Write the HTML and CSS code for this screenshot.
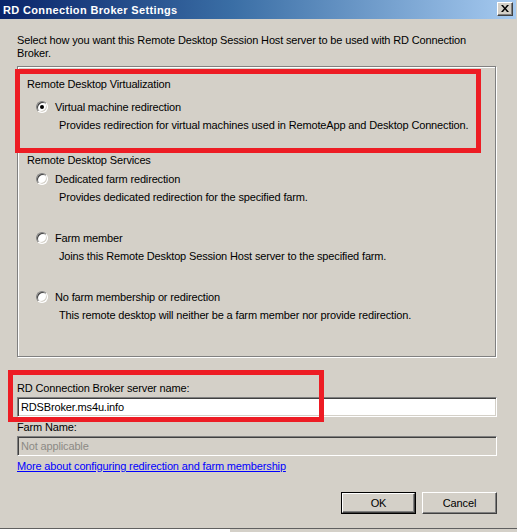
FILE: index.html
```html
<!DOCTYPE html>
<html>
<head>
<meta charset="utf-8">
<link rel="stylesheet" href="styles.css">
</head>
<body>
<div class="window">
  <div class="titlebar">
    <span class="title">RD Connection Broker Settings</span>
    <span class="close">
      <svg width="8" height="7" viewBox="0 0 8 7"><path d="M0 0h2l2 2.5L6 0h2L5 3.5 8 7H6L4 4.5 2 7H0l3-3.5z" fill="#000"/></svg>
    </span>
  </div>
  <div class="content">
    <p class="intro">Select how you want this Remote Desktop Session Host server to be used with RD Connection<br>Broker.</p>
    <div class="group">
      <div class="heading">Remote Desktop Virtualization</div>
      <div class="option first">
        <div class="opt-row"><span class="radio checked"></span><span>Virtual machine redirection</span></div>
        <div class="desc">Provides redirection for virtual machines used in RemoteApp and Desktop Connection.</div>
      </div>
      <div class="heading second">Remote Desktop Services</div>
      <div class="option">
        <div class="opt-row"><span class="radio"></span><span>Dedicated farm redirection</span></div>
        <div class="desc">Provides dedicated redirection for the specified farm.</div>
      </div>
      <div class="option spaced">
        <div class="opt-row"><span class="radio"></span><span>Farm member</span></div>
        <div class="desc">Joins this Remote Desktop Session Host server to the specified farm.</div>
      </div>
      <div class="option spaced">
        <div class="opt-row"><span class="radio"></span><span>No farm membership or redirection</span></div>
        <div class="desc">This remote desktop will neither be a farm member nor provide redirection.</div>
      </div>
    </div>
    <div class="field-label server">RD Connection Broker server name:</div>
    <div class="textbox">RDSBroker.ms4u.info</div>
    <div class="field-label farm">Farm Name:</div>
    <div class="textbox disabled">Not applicable</div>
    <a class="link" href="#">More about configuring redirection and farm membership</a>
    <div class="buttons">
      <div class="btn default"><span class="btn-inner">OK</span></div>
      <div class="btn"><span class="btn-inner">Cancel</span></div>
    </div>
  </div>
  <div class="bottom-strip"><span class="strip-white"></span><span class="strip-gray"></span></div>
  <div class="annot annot-1"></div>
  <div class="annot annot-2"></div>
</div>
</body>
</html>
```
FILE: styles.css
```css
html, body {
  margin: 0;
  padding: 0;
}
body {
  background: #d4d0c8;
  font-family: "Liberation Sans", Arial, sans-serif;
  font-size: 11px;
  line-height: 13px;
  letter-spacing: -0.15px;
  color: #000;
}
.window {
  position: relative;
  width: 517px;
  height: 532px;
  overflow: hidden;
  background: #d4d0c8;
  display: flex;
  flex-direction: column;
}
.titlebar {
  height: 19px;
  flex: none;
  background: linear-gradient(to right, #0a246a 0%, #3a6ea5 45%, #a6caf0 100%);
  display: flex;
  align-items: center;
  justify-content: space-between;
  padding: 0 3px 0 3px;
  width: 516px;
  box-sizing: border-box;
}
.title {
  color: #fff;
  font-weight: bold;
  font-size: 11px;
  line-height: 13px;
  letter-spacing: 0.35px;
  margin-top: 1px;
}
.close {
  width: 16px;
  height: 14px;
  box-sizing: border-box;
  background: #d4d0c8;
  border: 1px solid;
  border-color: #fff #404040 #404040 #fff;
  box-shadow: inset -1px -1px 0 #808080;
  display: flex;
  align-items: center;
  justify-content: center;
  margin-top: -2px;
}
.content {
  padding: 0 20px 0 17px;
  flex: 1;
  display: flex;
  flex-direction: column;
}
.intro {
  margin: 15px 0 0 0;
}
.group {
  margin-top: 6px;
  height: 291px;
  box-sizing: border-box;
  border: 1px solid #808080;
  box-shadow: 1px 1px 0 #fff, inset 1px 1px 0 #fff;
  padding: 11px 0 0 9px;
  width: 479px;
}
.heading.second {
  margin-top: 22px;
}
.option {
  margin-top: 6px;
}
.option.first {
  margin-top: 10px;
}
.option.spaced {
  margin-top: 28px;
}
.opt-row {
  display: flex;
  align-items: center;
}
.radio {
  width: 12px;
  height: 12px;
  box-sizing: border-box;
  border-radius: 50%;
  background: #fff;
  border: 1px solid;
  border-color: #808080 #fff #fff #808080;
  box-shadow: inset 1px 1px 0 #404040, inset -1px -1px 0 #d4d0c8;
  margin: -1px 7px 0 9px;
  position: relative;
  flex: none;
}
.radio.checked::after {
  content: "";
  position: absolute;
  left: 3px;
  top: 3px;
  width: 4px;
  height: 4px;
  border-radius: 50%;
  background: #000;
}
.desc {
  margin: 5px 0 0 32px;
}
.field-label.server {
  margin-top: 25px;
}
.field-label.farm {
  margin-top: 4px;
}
.textbox {
  margin-top: 2px;
  height: 20px;
  width: 480px;
  box-sizing: border-box;
  background: #fff;
  border: 1px solid;
  border-color: #808080 #fff #fff #808080;
  box-shadow: inset 1px 1px 0 #404040, inset -1px -1px 0 #d4d0c8;
  padding: 3px 0 0 3px;
}
.textbox.disabled {
  background: #d4d0c8;
  color: #8c8a85;
}
.link {
  margin-top: 4px;
  color: #0000ff;
  text-decoration: underline;
  align-self: flex-start;
}
.buttons {
  margin-top: 19px;
  display: flex;
  justify-content: flex-end;
  gap: 6px;
}
.btn {
  width: 75px;
  height: 22px;
  box-sizing: border-box;
  border: 1px solid;
  border-color: #fff #404040 #404040 #fff;
  box-shadow: inset -1px -1px 0 #808080;
  display: flex;
  align-items: center;
  justify-content: center;
}
.btn.default {
  border: 1px solid #000;
  box-shadow: none;
}
.btn.default .btn-inner {
  width: 73px;
  height: 20px;
  box-sizing: border-box;
  border: 1px solid;
  border-color: #fff #404040 #404040 #fff;
  box-shadow: inset -1px -1px 0 #808080;
  display: flex;
  align-items: center;
  justify-content: center;
}
.bottom-strip {
  position: absolute;
  left: 0;
  bottom: 0;
  width: 517px;
  height: 4px;
  border-top: 1px solid #606060;
  box-sizing: border-box;
  display: flex;
}
.strip-white {
  width: 230px;
  background: #fff;
}
.strip-gray {
  flex: 1;
  background: #d4d0c8;
}
.annot {
  position: absolute;
  border: 5px solid #ed1c24;
  box-sizing: border-box;
}
.annot-1 {
  left: 15px;
  top: 69px;
  width: 466px;
  height: 84px;
}
.annot-2 {
  left: 8px;
  top: 370px;
  width: 316px;
  height: 52px;
}
```
